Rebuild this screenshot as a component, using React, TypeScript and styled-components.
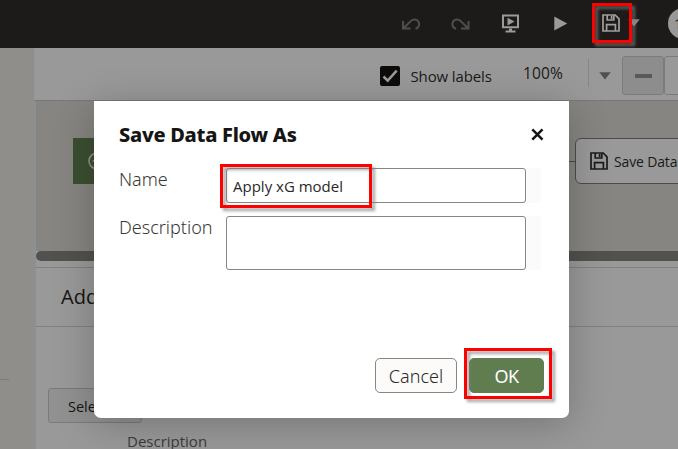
import React from "react";
import styled, { createGlobalStyle } from "styled-components";

const Global = createGlobalStyle`
  * { box-sizing: border-box; }
  body { margin: 0; overflow: hidden; font-family: "Open Sans", "Noto Sans", sans-serif; }
`;

const Page = styled.div`
  position: relative;
  width: 678px;
  height: 449px;
  overflow: hidden;
  display: flex;
  flex-direction: column;
  background: #999;
`;
const Header = styled.header`
  height: 48px;
  flex: none;
  background: #1d1b19;
  display: flex;
  align-items: flex-start;
  padding: 8px 0 0 396px;
`;
const HeaderSlot = styled.div<{ $w: number }>`
  width: ${(p) => p.$w}px;
  height: 30px;
  flex: none;
  display: flex;
  align-items: center;
`;
const Avatar = styled.div`
  width: 31px;
  height: 31px;
  flex: none;
  border-radius: 50%;
  background: #989898;
  color: #1d1b19;
  font-size: 15px;
  line-height: 30px;
  padding-left: 6px;
`;
const Body = styled.div`
  flex: 1;
  display: flex;
  min-height: 0;
`;
const Sidebar = styled.aside`
  width: 34px;
  flex: none;
  background: #908e8b;
  padding-top: 331px;
`;
const SidebarRule = styled.div`
  width: 9px;
  height: 1px;
  background: #7e7c79;
`;
const Main = styled.main`
  flex: 1;
  min-width: 0;
  display: flex;
  flex-direction: column;
`;
const Toolbar = styled.div`
  height: 53px;
  flex: none;
  border-bottom: 1px solid #7b7977;
  background: #999;
  display: flex;
  align-items: flex-start;
  padding: 8px 0 0 346px;
  overflow: hidden;
`;
const Checkbox = styled.div`
  width: 20px;
  height: 20px;
  margin-top: 10px;
  flex: none;
  border-radius: 2px;
  background: #0d0c0b;
`;
const CheckLabel = styled.div`
  width: 105px;
  flex: none;
  padding: 9px 0 0 10.5px;
  font-size: 15px;
  letter-spacing: -0.13px;
  line-height: 22px;
  color: #1a1918;
`;
const Zoom = styled.div`
  width: 84px;
  height: 28px;
  margin-top: 3px;
  flex: none;
  border-right: 1px solid #878685;
  padding-left: 18px;
  font-size: 15.5px;
  letter-spacing: 0.15px;
  line-height: 29px;
  color: #1a1918;
`;
const ZoomCaret = styled.div`
  width: 33px;
  flex: none;
  padding: 16px 0 0 10px;
  line-height: 0;
`;
const ZoomButton = styled.div<{ $active?: boolean }>`
  width: 42px;
  height: 39px;
  flex: none;
  border: 1px solid #7d7c7b;
  border-radius: 3px;
  background: ${(p) => (p.$active ? "#8d8d8d" : "#999")};
  display: flex;
  align-items: center;
  justify-content: center;
`;
const MinusBar = styled.span`
  width: 17px;
  height: 4px;
  background: #5a5958;
`;
const Work = styled.div`
  flex: 1;
  border-left: 2px solid #8b9093;
  display: flex;
  flex-direction: column;
`;
const Canvas = styled.div`
  height: 150px;
  flex: none;
  background: #878582;
  display: flex;
  align-items: flex-start;
  padding: 37px 0 0 37px;
`;
const SourceNode = styled.div`
  width: 120px;
  height: 46px;
  flex: none;
  background: #3c4f31;
  padding: 14px 0 0 15px;
`;
const Connector = styled.div`
  flex: 1;
  height: 1px;
  margin-top: 23px;
  background: #4e4c4a;
`;
const SaveNode = styled.div`
  width: 150px;
  height: 46px;
  flex: none;
  margin-right: -47px;
  border: 1px solid #4e4c4a;
  border-radius: 6px;
  background: #999;
  display: flex;
  align-items: center;
  gap: 6px;
  padding-left: 14px;
  font-size: 14px;
  letter-spacing: -0.15px;
  color: #1a1918;
  white-space: nowrap;
`;
const Scroll = styled.div`
  height: 17px;
  flex: none;
  border-bottom: 1px solid #818180;
`;
const Thumb = styled.div`
  height: 10px;
  margin-right: -10px;
  border-radius: 5px;
  background: #53514e;
`;
const PanelTitle = styled.div`
  height: 59px;
  flex: none;
  border-bottom: 1px solid #818180;
  padding-left: 25px;
  font-size: 20px;
  line-height: 58px;
  color: #161513;
`;
const Panel = styled.div`
  flex: 1;
  padding: 61px 0 0 12px;
`;
const SelectButton = styled.div`
  width: 94px;
  height: 35px;
  border: 1px solid #7b7a79;
  border-radius: 3px;
  background: #919191;
  padding-left: 19px;
  font-size: 14.5px;
  line-height: 35px;
  color: #161513;
`;
const PanelLabel = styled.div`
  padding: 10px 0 0 79px;
  font-size: 15px;
  line-height: 16px;
  color: #3d3b39;
`;

const Dialog = styled.section`
  position: absolute;
  left: 94px;
  top: 101px;
  width: 475px;
  height: 317px;
  background: #fff;
  border-radius: 0 0 7px 7px;
  box-shadow: 0 6px 40px rgba(0, 0, 0, 0.24);
  display: flex;
  flex-direction: column;
  padding: 0 25px;
`;
const DialogHead = styled.div`
  height: 67px;
  flex: none;
  display: flex;
  justify-content: space-between;
  align-items: center;
`;
const DialogTitle = styled.h1`
  margin: 0;
  font-family: "Noto Sans", sans-serif;
  font-size: 20px;
  line-height: 28px;
  font-weight: 800;
  letter-spacing: -0.27px;
  color: #161513;
  white-space: nowrap;
`;
const Field = styled.div<{ $h: number }>`
  height: ${(p) => p.$h}px;
  flex: none;
  margin-bottom: 13px;
  display: flex;
`;
const FieldLabel = styled.label`
  width: 107px;
  flex: none;
  font-family: "Noto Sans", sans-serif;
  font-weight: 340;
  font-size: 18px;
  line-height: 23px;
  color: #3a3836;
`;
const FieldCell = styled.div`
  width: 315px;
  flex: none;
  background: #fbfbfb;
  padding-right: 15px;
`;
const FieldBox = styled.div`
  height: 100%;
  border: 1px solid #8b8580;
  border-radius: 3px;
  background: #fff;
  padding-left: 6px;
  font-size: 15px;
  line-height: 35px;
  color: #2a2826;
`;
const Actions = styled.div`
  margin-top: auto;
  padding-bottom: 25px;
  display: flex;
  justify-content: flex-end;
  gap: 12px;
`;
const Button = styled.button<{ $primary?: boolean }>`
  width: ${(p) => (p.$primary ? 75 : 82)}px;
  height: 35px;
  padding: 1px 0 0;
  border: 1px solid ${(p) => (p.$primary ? "#5f7d4f" : "#8b8580")};
  border-radius: 5px;
  background: ${(p) => (p.$primary ? "#5f7d4f" : "#fcfbfa")};
  color: ${(p) => (p.$primary ? "#fff" : "#2a2826")};
  font-family: "Noto Sans", sans-serif;
  font-weight: ${(p) => (p.$primary ? 450 : 340)};
  font-size: 18px;
  letter-spacing: ${(p) => (p.$primary ? -0.5 : 0)}px;
  line-height: 33px;
`;
const Highlight = styled.div<{ $x: number; $y: number; $w: number; $h: number }>`
  position: absolute;
  left: ${(p) => p.$x}px;
  top: ${(p) => p.$y}px;
  width: ${(p) => p.$w}px;
  height: ${(p) => p.$h}px;
  border: 3px solid #fe0000;
  filter: drop-shadow(3px 3px 1.5px rgba(125, 125, 125, 0.7));
`;

const UndoIcon = ({ flip }: { flip?: boolean }) => (
  <svg width="30" height="31" viewBox="0 0 30 31" fill="none" stroke="#504e4c" strokeWidth="2">
    <g transform={flip ? "translate(29.5 0) scale(-1 1)" : undefined}>
      <path d="M7 13V20.5h7.5M7.5 20.3 15 12.9a4.7 4.7 0 1 1 4.5 7.8" />
    </g>
  </svg>
);
const MonitorIcon = () => (
  <svg width="30" height="31" viewBox="0 0 30 31">
    <path d="M7 7.5h15v11.8H7z" fill="none" stroke="#9b9999" strokeWidth="2" />
    <path d="m11.5 9.8 7 3.8-7 3.9z" fill="#9b9999" />
    <path d="M13 20.5h3v2h3.5v2h-10v-2H13z" fill="#9b9999" />
  </svg>
);
const SaveIcon = ({ color }: { color: string }) => (
  <svg width="18" height="18" viewBox="0 0 18 18" fill="none" stroke={color} strokeWidth="1.7">
    <path d="M1 1h12.2L17 4.8V17H1zM5.2 1.2V6h6.6V1.2M4.6 17v-6.4h8.8V17" />
    <path d="M9.6 2v3" />
  </svg>
);
const Caret = ({ color }: { color: string }) => (
  <svg width="12" height="8" viewBox="0 0 12 8">
    <path d="M.3.3h11.4L6 7.6z" fill={color} />
  </svg>
);

export default function App() {
  return (
    <Page>
      <Global />
      <Header>
        <HeaderSlot $w={50}><UndoIcon /></HeaderSlot>
        <HeaderSlot $w={50}><UndoIcon flip /></HeaderSlot>
        <HeaderSlot $w={58}><MonitorIcon /></HeaderSlot>
        <HeaderSlot $w={48}>
          <svg width="14" height="16" viewBox="0 0 14 16"><path d="M.3 1.5 13.2 8.5 .3 15.5z" fill="#9b9999" /></svg>
        </HeaderSlot>
        <HeaderSlot $w={26}><SaveIcon color="#a19f9d" /></HeaderSlot>
        <HeaderSlot $w={40}><Caret color="#8d8b89" /></HeaderSlot>
        <Avatar>1</Avatar>
      </Header>
      <Body>
        <Sidebar><SidebarRule /></Sidebar>
        <Main>
          <Toolbar>
            <Checkbox>
              <svg width="20" height="20" viewBox="0 0 20 20">
                <path d="m3.5 10.5 4.2 4.2 9-10" fill="none" stroke="#9b9b9b" strokeWidth="2.5" />
              </svg>
            </Checkbox>
            <CheckLabel>Show labels</CheckLabel>
            <Zoom>100%</Zoom>
            <ZoomCaret><Caret color="#51504e" /></ZoomCaret>
            <ZoomButton $active><MinusBar /></ZoomButton>
            <ZoomButton />
          </Toolbar>
          <Work>
            <Canvas>
              <SourceNode>
                <svg width="18" height="18" viewBox="0 0 18 18" fill="none" stroke="#8f928c" strokeWidth="1.6">
                  <circle cx="9" cy="9" r="8" />
                  <path d="M4.5 9h9M9 4.5v9" />
                </svg>
              </SourceNode>
              <Connector />
              <SaveNode><SaveIcon color="#1d1b19" />Save Data</SaveNode>
            </Canvas>
            <Scroll><Thumb /></Scroll>
            <PanelTitle>Add Data</PanelTitle>
            <Panel>
              <SelectButton>Select...</SelectButton>
              <PanelLabel>Description</PanelLabel>
            </Panel>
          </Work>
        </Main>
      </Body>
      <Dialog>
        <DialogHead>
          <DialogTitle>Save Data Flow As</DialogTitle>
          <svg width="13" height="13" viewBox="0 0 13 13" stroke="#161513" strokeWidth="2.5">
            <path d="m1.3 1.3 10.2 10.4M11.5 1.3 1.3 11.7" />
          </svg>
        </DialogHead>
        <Field $h={35}>
          <FieldLabel>Name</FieldLabel>
          <FieldCell><FieldBox>Apply xG model</FieldBox></FieldCell>
        </Field>
        <Field $h={54}>
          <FieldLabel>Description</FieldLabel>
          <FieldCell><FieldBox /></FieldCell>
        </Field>
        <Actions>
          <Button>Cancel</Button>
          <Button $primary>OK</Button>
        </Actions>
      </Dialog>
      <Highlight $x={592} $y={3} $w={40} $h={40} />
      <Highlight $x={220} $y={164} $w={152} $h={44} />
      <Highlight $x={464} $y={348} $w={88} $h={51} />
    </Page>
  );
}
